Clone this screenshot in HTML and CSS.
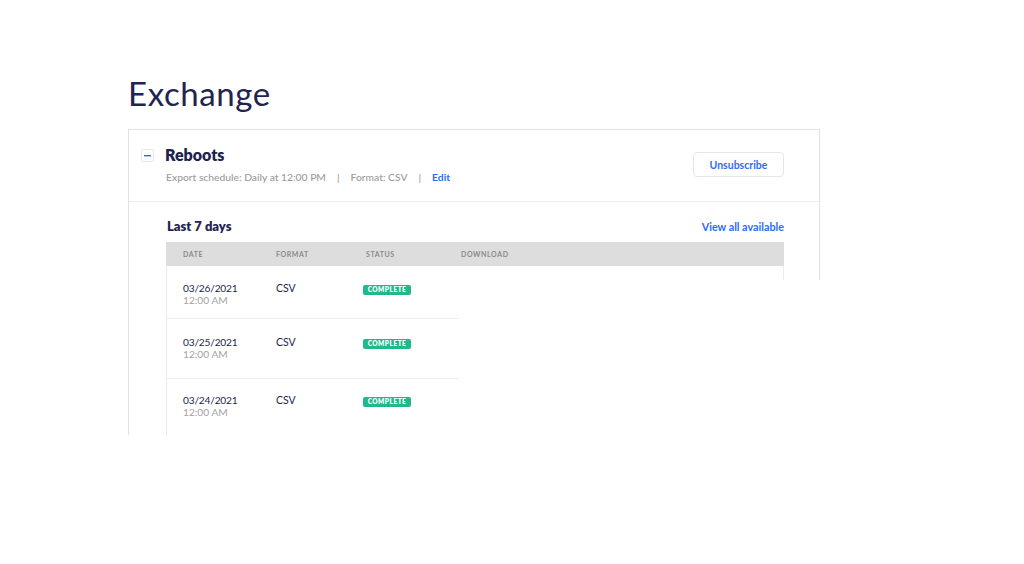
FILE: index.html
```html
<!DOCTYPE html>
<html lang="en">
<head>
<meta charset="utf-8">
<title>Exchange</title>
<link rel="stylesheet" href="styles.css">
</head>
<body>
<main class="page">
  <h1 class="page-title">Exchange</h1>
  <section class="card">
    <header class="card-head">
      <button class="toggle" type="button" aria-label="Collapse">
        <svg width="7" height="2" viewBox="0 0 7 2"><rect x="0" y="0" width="7" height="1.4" fill="#2d6df6"/></svg>
      </button>
      <div class="head-text">
        <h2 class="feed-name">Reboots</h2>
        <p class="schedule">Export schedule: Daily at 12:00 PM<span class="sep">|</span>Format: CSV<span class="sep">|</span><a class="edit" href="#">Edit</a></p>
      </div>
      <button class="unsub" type="button">Unsubscribe</button>
    </header>
    <div class="card-body">
      <div class="body-head">
        <h3 class="range">Last 7 days</h3>
        <a class="view-all" href="#">View all available</a>
      </div>
      <div class="table">
        <div class="row th">
          <span>Date</span><span>Format</span><span>Status</span><span>Download</span>
        </div>
        <div class="row tr">
          <div class="cell date"><div class="d">03/26/2021</div><div class="t">12:00 AM</div></div>
          <div class="cell fmt">CSV</div>
          <div class="cell"><span class="badge">Complete</span></div>
          <div class="cell"></div>
        </div>
        <div class="row tr">
          <div class="cell date"><div class="d">03/25/2021</div><div class="t">12:00 AM</div></div>
          <div class="cell fmt">CSV</div>
          <div class="cell"><span class="badge">Complete</span></div>
          <div class="cell"></div>
        </div>
        <div class="row tr">
          <div class="cell date"><div class="d">03/24/2021</div><div class="t">12:00 AM</div></div>
          <div class="cell fmt">CSV</div>
          <div class="cell"><span class="badge">Complete</span></div>
          <div class="cell"></div>
        </div>
      </div>
    </div>
  </section>
</main>
</body>
</html>
```

FILE: styles.css
```css
* { box-sizing: border-box; }
html, body { margin: 0; padding: 0; background: #fff; }
body {
  font-family: Lato, "Noto Sans", sans-serif;
  color: #1f2451;
  width: 1024px;
  height: 564px;
  overflow: hidden;
}
.page { padding: 73px 0 0 128px; }
.page-title {
  margin: 0 0 16px 0;
  font-size: 33px;
  line-height: 40px;
  font-weight: 400;
  color: #1f2451;
  letter-spacing: 0.6px;
}
.card {
  width: 692px;
  border: 1px solid #e2e2e2;
  clip-path: polygon(0 0, 100% 0, 100% 151px, 331px 151px, 331px 306px, 0 306px);
}
.card-head {
  display: flex;
  align-items: flex-start;
  padding: 15px 35px 17px 12px;
  border-bottom: 1px solid #ededed;
}
.toggle {
  width: 13px;
  height: 13px;
  margin: 4px 11px 0 0;
  padding: 0;
  border: 1px solid #e6e6e6;
  border-radius: 2px;
  background: #fff;
  display: flex;
  align-items: center;
  justify-content: center;
}
.head-text { flex: 1; }
.feed-name {
  margin: 0;
  font-size: 16px;
  line-height: 20px;
  font-weight: 800;
  color: #1c2350;
}
.schedule {
  margin: 5px 0 0 1px;
  font-size: 10.3px;
  line-height: 14px;
  color: #9b9b9b;
  font-weight: 500;
}
.sep { margin: 0 11px 0 11px; color: #9b9b9b; }
.edit { color: #2d6df6; text-decoration: none; font-weight: 700; }
.unsub {
  margin-top: 7px;
  width: 91px;
  height: 25px;
  border: 1px solid #e6e6e6;
  border-radius: 4px;
  background: #fff;
  color: #2d6df6;
  font-family: inherit;
  font-size: 10.5px;
  font-weight: 700;
  padding: 0;
}
.card-body { padding: 16px 35px 40px 37px; }
.body-head {
  display: flex;
  justify-content: space-between;
  align-items: baseline;
  margin-left: 1px;
  margin-bottom: 8px;
}
.range {
  margin: 0;
  font-size: 13px;
  line-height: 16px;
  font-weight: 800;
  color: #1f2451;
}
.view-all {
  color: #2d6df6;
  font-size: 10.8px;
  font-weight: 700;
  text-decoration: none;
}
.table {
  border-left: 1px solid #ececec;
  border-right: 1px solid #ececec;
}
.row {
  display: grid;
  grid-template-columns: 93px 90px 95px 1fr;
  padding-left: 16px;
}
.th {
  background: #dddddd;
  height: 24px;
  align-items: center;
  margin: 0 -1px;
  padding-left: 17px;
  font-size: 7px;
  letter-spacing: 0.6px;
  text-transform: uppercase;
  color: #8a8a8a;
  font-weight: 700;
}
.tr {
  border-bottom: 1px solid #ededed;
  padding-top: 16px;
  align-items: start;
}
.tr:nth-child(2) { height: 53px; }
.tr:nth-child(3) { height: 60px; padding-top: 17px; }
.tr:nth-child(4) { height: 60px; padding-top: 15px; }
.cell { font-size: 10.5px; line-height: 12px; }
.date { font-size: 10.2px; }
.date .d { color: #1a1f4a; font-weight: 400; letter-spacing: -0.2px; }
.date .t { color: #a3a3a3; }
.fmt { color: #1a1f4a; font-weight: 400; }
.badge {
  display: inline-block;
  margin: 1px 0 0 -3px;
  width: 48px;
  height: 10px;
  border-radius: 2px;
  background: #1fb98b;
  color: #fff;
  font-size: 6.5px;
  line-height: 10px;
  font-weight: 800;
  letter-spacing: 0.5px;
  text-transform: uppercase;
  text-align: center;
}
```
